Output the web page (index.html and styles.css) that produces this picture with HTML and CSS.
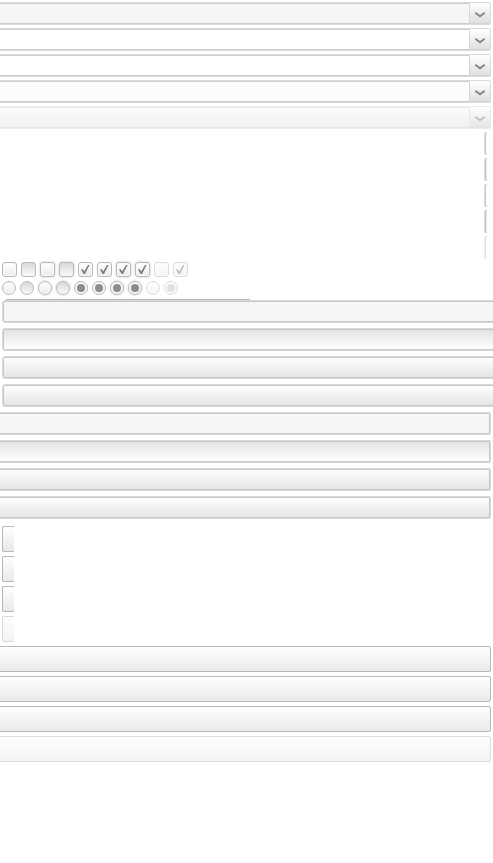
FILE: index.html
```html
<!DOCTYPE html>
<html lang="en">
<head>
<meta charset="utf-8">
<meta name="viewport" content="width=device-width">
<title>Form controls</title>
<link rel="stylesheet" href="styles.css">
</head>
<body>
<main>
  <section class="combos" aria-label="Combo boxes">
    <div class="combo flat"><input type="text" aria-label="Combo default"><button type="button" aria-label="Open default"><svg viewBox="0 0 12 8"><path d="M1.3 1.7 6 5.2 10.7 1.7"/></svg></button></div>
    <div class="combo"><input type="text" aria-label="Combo hover"><button type="button" aria-label="Open hover"><svg viewBox="0 0 12 8"><path d="M1.3 1.7 6 5.2 10.7 1.7"/></svg></button></div>
    <div class="combo"><input type="text" aria-label="Combo focus"><button type="button" aria-label="Open focus"><svg viewBox="0 0 12 8"><path d="M1.3 1.7 6 5.2 10.7 1.7"/></svg></button></div>
    <div class="combo soft"><input type="text" aria-label="Combo pressed"><button type="button" aria-label="Open pressed"><svg viewBox="0 0 12 8"><path d="M1.3 1.7 6 5.2 10.7 1.7"/></svg></button></div>
    <div class="combo disabled"><input type="text" aria-label="Combo disabled" disabled><button type="button" aria-label="Open disabled" disabled><svg viewBox="0 0 12 8"><path d="M1.3 1.7 6 5.2 10.7 1.7"/></svg></button></div>
  </section>
  <section class="edges" aria-hidden="true">
    <div class="edge"></div>
    <div class="edge shaded"></div>
    <div class="edge"></div>
    <div class="edge shaded"></div>
    <div class="edge faded"></div>
  </section>
  <section class="checks" aria-label="Check boxes">
    <input type="checkbox" aria-label="Default">
    <input type="checkbox" class="pressed" aria-label="Pressed">
    <input type="checkbox" class="glow" aria-label="Focused">
    <input type="checkbox" class="glow pressed" aria-label="Focused pressed">
    <input type="checkbox" checked aria-label="Checked">
    <input type="checkbox" checked aria-label="Checked pressed">
    <input type="checkbox" class="glow" checked aria-label="Checked focused">
    <input type="checkbox" class="glow" checked aria-label="Checked focused pressed">
    <input type="checkbox" disabled aria-label="Disabled">
    <input type="checkbox" checked disabled aria-label="Checked disabled">
  </section>
  <section class="radios" aria-label="Radio buttons">
    <input type="radio" name="r1" aria-label="Default">
    <input type="radio" name="r2" class="pressed" aria-label="Pressed">
    <input type="radio" name="r3" class="glow" aria-label="Focused">
    <input type="radio" name="r4" class="glow pressed" aria-label="Focused pressed">
    <input type="radio" name="r5" checked aria-label="Selected">
    <input type="radio" name="r6" checked aria-label="Selected pressed">
    <input type="radio" name="r7" class="glow" checked aria-label="Selected focused">
    <input type="radio" name="r8" class="glow" checked aria-label="Selected focused pressed">
    <input type="radio" name="r9" disabled aria-label="Disabled">
    <input type="radio" name="r10" checked disabled aria-label="Selected disabled">
  </section>
  <div class="rule"></div>
  <section class="bars" aria-label="Selects">
    <button type="button" class="bar left flat" aria-label="Start default"></button>
    <button type="button" class="bar left pressed" aria-label="Start pressed"></button>
    <button type="button" class="bar left" aria-label="Start hover"></button>
    <button type="button" class="bar left" aria-label="Start focus"></button>
    <button type="button" class="bar right flat" aria-label="End default"></button>
    <button type="button" class="bar right pressed" aria-label="End pressed"></button>
    <button type="button" class="bar right" aria-label="End hover"></button>
    <button type="button" class="bar right" aria-label="End focus"></button>
  </section>
  <section class="buttons" aria-label="Buttons">
    <button type="button" class="btn cap" aria-label="Cap default"></button>
    <button type="button" class="btn cap" aria-label="Cap hover"></button>
    <button type="button" class="btn cap" aria-label="Cap focus"></button>
    <button type="button" class="btn cap" disabled aria-label="Cap disabled"></button>
    <button type="button" class="btn wide" aria-label="Wide default"></button>
    <button type="button" class="btn wide" aria-label="Wide hover"></button>
    <button type="button" class="btn wide" aria-label="Wide focus"></button>
    <button type="button" class="btn wide" disabled aria-label="Wide disabled"></button>
  </section>
</main>
</body>
</html>
```

FILE: styles.css
```css
* { box-sizing: border-box; }

body {
  margin: 0;
  background: #fff;
  font-family: "Liberation Sans", sans-serif;
}

main {
  padding-top: 2px;
  overflow-x: hidden;
}

input, button {
  appearance: none;
  display: block;
  margin: 0;
  padding: 0;
  border-radius: 0;
}

.combos, .edges {
  display: grid;
  gap: 3px;
  padding-right: 2px;
}

.combo {
  display: flex;
  height: 23px;
}

.combo input {
  flex: 1;
  min-width: 0;
  border: solid #dadada;
  border-width: 1px 0;
  background: #fff;
  box-shadow: inset 0 1px #d0d0d0, inset 0 -1px #cdcdcd;
}

.combo.flat input { background: #f6f6f6; }
.combo.soft input { background: #fcfcfc; }

.combo button {
  display: grid;
  place-items: center;
  width: 22px;
  padding-top: 3px;
  border: 1px solid #dadada;
  border-left-color: #d6d6d6;
  border-radius: 0 2px 2px 0;
  background: linear-gradient(#fff, #dedede);
  box-shadow: inset 0 -1px #d4d4d4;
}

.combo svg {
  width: 12px;
  height: 8px;
  fill: none;
  stroke: #858585;
  stroke-width: 2;
}

.combo.disabled input {
  border-color: #eee;
  background: linear-gradient(#fcfcfc, #f0f0f0);
  box-shadow: inset 0 1px #e8e8e8, inset 0 -1px #e6e6e6;
}

.combo.disabled button {
  border-color: #eaeaea;
  background: linear-gradient(#fff, #e4e4e4);
  box-shadow: none;
}

.combo.disabled svg { stroke: #c2c2c2; }

.edges {
  justify-items: end;
  padding: 3px 6px 0 0;
}

.edge {
  width: 3px;
  height: 23px;
  border: solid #d0d0d0;
  border-width: 1px 0 1px 1px;
  border-left-color: #dedede;
  border-radius: 2px 0 0 2px;
  background: #fff;
  box-shadow: inset 1px 0 #c4c4c4;
}

.edge.shaded { background: #eaeaea; }
.edge.faded { opacity: .5; }

.checks, .radios { display: flex; gap: 4px; }
.checks { padding: 3px 2px 4px; }
.radios { padding: 0 2px 4px; }

.checks input, .radios input {
  display: grid;
  place-items: center;
  border: 1px solid #b8b8b8;
  background: linear-gradient(#fff, #ebebeb);
  box-shadow: inset 0 0 0 1px #fafafa;
}

.checks input {
  width: 15px;
  height: 15px;
  border-radius: 3px;
}

.radios input {
  width: 14px;
  height: 14px;
  border-radius: 50%;
}

.checks .pressed, .radios .pressed {
  background: linear-gradient(#d8d8d8, #fafafa);
  box-shadow: none;
}

.checks .glow, .radios .glow { box-shadow: 0 0 2px 1px #e9e9e9, inset 0 0 0 1px #fafafa; }
.checks .glow.pressed, .radios .glow.pressed { box-shadow: 0 0 2px 1px #e9e9e9; }

.checks input:checked::before {
  content: "";
  width: 9px;
  height: 9px;
  background: #7c7c7c;
  clip-path: polygon(0 52%, 18% 44%, 36% 72%, 78% 0, 96% 0, 44% 100%, 30% 100%);
}

.radios input:checked::before {
  content: "";
  width: 8px;
  height: 8px;
  border-radius: 50%;
  background: #8c8c8c;
}

.checks input:disabled, .radios input:disabled { opacity: .5; }
.radios input:disabled::before { background: #c6c6c6; }

.rule {
  width: 244px;
  height: 1px;
  margin-left: 6px;
  background: #b5b5b5;
}

.bars { display: grid; gap: 5px; }

.bar {
  height: 23px;
  border: 1px solid #d8d8d8;
  background: linear-gradient(#fff, #e4e4e4);
  box-shadow: inset 0 0 0 1px #c8c8c8;
}

.bar.left {
  margin-left: 2px;
  margin-right: -4px;
  border-radius: 3px 0 0 3px;
}

.bar.right {
  margin-left: -4px;
  margin-right: 2px;
  border-radius: 0 2px 2px 0;
}

.bar.flat { background: #f6f6f6; }
.bar.pressed { background: linear-gradient(#e2e2e2, #fff); }

.buttons {
  display: grid;
  gap: 4px;
  padding-top: 7px;
}

.btn {
  height: 26px;
  border: 1px solid #b8b8b8;
  background: linear-gradient(#fff, #e9e9e9);
}

.btn:disabled { opacity: .5; }

.cap {
  width: 12px;
  margin-left: 2px;
  border-right: 0;
  border-radius: 2px 0 0 2px;
}

.wide {
  margin-left: -4px;
  margin-right: 2px;
  border-radius: 0 2px 2px 0;
}
```
